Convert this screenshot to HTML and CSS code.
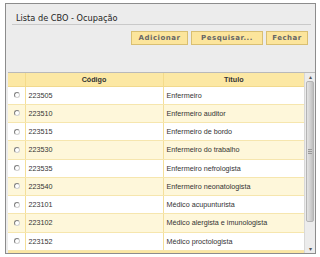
FILE: index.html
```html
<!DOCTYPE html>
<html lang="pt-BR">
<head>
    <meta charset="UTF-8">
    <title>Lista de CBO - Ocupação</title>
    <link rel="stylesheet" href="styles.css">
</head>
<body>

<div class="janela">
    <div class="titulo">Lista de CBO - Ocupação</div>

    <div class="barra-botoes">
        <button class="botao botao-adicionar">Adicionar</button>
        <button class="botao botao-pesquisar">Pesquisar...</button>
        <button class="botao botao-fechar">Fechar</button>
    </div>

    <div class="grade">
        <div class="grade-corpo">
            <table class="tabela">
                <thead>
                    <tr>
                        <th class="col-sel"></th>
                        <th class="col-cod">Código</th>
                        <th>Título</th>
                    </tr>
                </thead>
                <tbody>
                    <tr><td class="col-sel"><span class="radio"></span></td><td>223505</td><td>Enfermeiro</td></tr>
                    <tr><td class="col-sel"><span class="radio"></span></td><td>223510</td><td>Enfermeiro auditor</td></tr>
                    <tr><td class="col-sel"><span class="radio"></span></td><td>223515</td><td>Enfermeiro de bordo</td></tr>
                    <tr><td class="col-sel"><span class="radio"></span></td><td>223530</td><td>Enfermeiro do trabalho</td></tr>
                    <tr><td class="col-sel"><span class="radio"></span></td><td>223535</td><td>Enfermeiro nefrologista</td></tr>
                    <tr><td class="col-sel"><span class="radio"></span></td><td>223540</td><td>Enfermeiro neonatologista</td></tr>
                    <tr><td class="col-sel"><span class="radio"></span></td><td>223101</td><td>Médico acupunturista</td></tr>
                    <tr><td class="col-sel"><span class="radio"></span></td><td>223102</td><td>Médico alergista e imunologista</td></tr>
                    <tr><td class="col-sel"><span class="radio"></span></td><td>223152</td><td>Médico proctologista</td></tr>
                </tbody>
            </table>
            <div class="linha-cortada"></div>
        </div>

        <div class="rolagem">
            <div class="seta">&#9652;</div>
            <div class="trilho">
                <div class="cursor"><span class="pegador"></span></div>
            </div>
            <div class="seta">&#9662;</div>
        </div>
    </div>
</div>

</body>
</html>
```

FILE: styles.css
```css
/* Zera as margens padrão */
* {
    margin: 0;
    padding: 0;
    box-sizing: border-box;
}

body {
    background-color: white;
    font-family: "Liberation Sans", Arial, sans-serif;
    width: 320px;
    height: 257px;
    overflow: hidden;
}

.janela {
    margin: 3px 4px 0 5px;
    width: 311px;
    height: 251px;
    border: 1px solid #8c8c8c;
    background-color: #ececec;
    display: flex;
    flex-direction: column;
}

.titulo {
    font-family: "DejaVu Sans", Verdana, sans-serif;
    font-size: 8.2px;
    color: #1e1e1e;
    padding: 9px 0 0 4px;
    height: 21px;
    margin: 0 4px 0 6px;
    border-bottom: 1px solid #c9c9c9;
}

.barra-botoes {
    display: flex;
    justify-content: flex-end;
    gap: 3px;
    padding: 6px 7px 0 0;
    height: 47px;
}

.botao {
    font-family: "DejaVu Sans", Verdana, sans-serif;
    font-size: 7px;
    font-weight: bold;
    letter-spacing: 0.5px;
    color: #666;
    background-color: #fce59c;
    border: 1px solid #d9bf72;
    height: 14px;
    cursor: pointer;
}

.botao-adicionar {
    width: 57px;
}

.botao-pesquisar {
    width: 72px;
}

.botao-fechar {
    width: 42px;
}

.grade {
    display: flex;
    margin-left: 2px;
    height: 181px;
    border-top: 1px solid #b9b9b9;
    overflow: hidden;
}

.grade-corpo {
    flex: 1;
    overflow: hidden;
    background-color: #fbe7a3;
}

.tabela {
    border-collapse: collapse;
    width: 100%;
    table-layout: fixed;
    font-size: 7.2px;
    color: #333;
}

.tabela th {
    background-color: #fce8a4;
    font-weight: bold;
    height: 13px;
    text-align: center;
    border-left: 1px solid #f4db8a;
    border-bottom: 1px solid #f1d98d;
}

.tabela td {
    height: 18.25px;
    padding-left: 3px;
    border-left: 1px solid #f4df9a;
    border-bottom: 1px solid #f6e6ae;
}

.tabela tbody tr:nth-child(odd) {
    background-color: #ffffff;
}

.tabela tbody tr:nth-child(even) {
    background-color: #fef7da;
}

.tabela th:first-child,
.tabela td:first-child {
    border-left: none;
}

.linha-cortada {
    height: 10px;
    background-color: #fbe7a3;
}

.col-sel {
    width: 17px;
}

.tabela td.col-sel {
    padding-left: 6px;
}

.col-cod {
    width: 138px;
}

.radio {
    display: block;
    width: 6px;
    height: 6px;
    border-radius: 50%;
    border: 1px solid #d0d0d0;
    border-top-color: #808080;
    border-left-color: #808080;
    background-color: white;
}

/* Barra de rolagem vertical */
.rolagem {
    width: 11px;
    display: flex;
    flex-direction: column;
    background-color: #ececec;
    border-left: 1px solid #d8d8d8;
}

.seta {
    height: 8px;
    font-size: 6px;
    line-height: 8px;
    text-align: center;
    color: #555;
}

.trilho {
    flex: 1;
    display: flex;
    flex-direction: column;
    padding-bottom: 23px;
}

.cursor {
    flex: 1;
    margin: 0 1px;
    background: linear-gradient(to right, #e4e4e4, #cfcfcf 60%, #bdbdbd);
    border: 1px solid #b4b4b4;
    border-radius: 2px;
    display: flex;
    align-items: center;
    justify-content: center;
}

.pegador {
    width: 4px;
    height: 5px;
    border-top: 1px solid #999;
    border-bottom: 1px solid #999;
    background: linear-gradient(#cfcfcf 40%, #999 40%, #999 60%, #cfcfcf 60%);
}
```
